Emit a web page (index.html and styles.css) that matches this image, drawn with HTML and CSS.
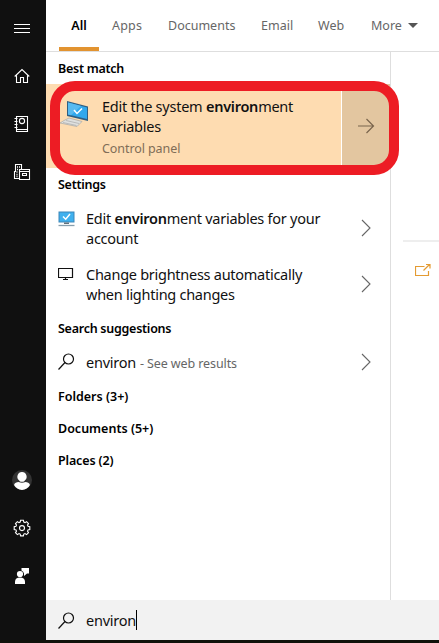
FILE: index.html
```html
<!DOCTYPE html>
<html lang="en">
<head>
<meta charset="utf-8">
<title>Search</title>
<link rel="stylesheet" href="styles.css">
</head>
<body>
<div class="window">
  <nav class="rail">
    <div class="rail-group">
      <svg class="rail-icon" viewBox="0 0 20 20"><path d="M2 6.500h16M2 10.500h16M2 14.500h16"/></svg>
      <svg class="rail-icon" viewBox="0 0 20 20"><path d="M2.700 10.500 10 3.500l7.300 7M4.500 9.500v7h4v-5h3v5h4v-7"/></svg>
      <svg class="rail-icon" viewBox="0 0 20 20"><path d="M4.500 2.500h11v15h-11zM4.500 15.500h11M2.500 4.500h3M2.500 7.500h3M2.500 10.500h3M2.500 13.500h3"/><circle cx="10" cy="7" r="2.600"/></svg>
      <svg class="rail-icon" viewBox="0 0 20 20"><path d="M7 16.500H2.500V9.500h1v-7h6v5M7.500 7.500h10v10h-10zM7.500 9.500h10M10.500 11.500h4v2h-4z"/><path d="M5 5h1M7 5h1M5 7.500h1M4.500 10h1M4.500 12.500h1M4.500 14.500h1" stroke-width="1.500"/></svg>
    </div>
    <div class="rail-group">
      <svg class="rail-icon" viewBox="0 0 20 20"><circle class="avatar" cx="10" cy="10" r="10"/><path class="solid" d="M10 2a4.500 4.700 0 0 1 3 8.300c-.8 1-1.200 1.500-3 1.500s-2.200-.5-3-1.500a4.500 4.700 0 0 1 3-8.300zM2 15c.8-2.300 2.500-3 4.500-3q3.500 1.500 7 0c2 0 3.700.7 4.500 3a10 10 0 0 1-8 5 10 10 0 0 1-8-5z"/></svg>
      <svg class="rail-icon" viewBox="0 0 20 20"><g transform="translate(0 -.700)"><path class="gear" d="M8.600 3h2.800l.4 1.800 1.200.5 1.600-1 1.900 1.900-1 1.600.5 1.200 1.800.4v2.800l-1.800.4-.5 1.200 1 1.600-1.900 1.900-1.600-1-1.200.5-.4 1.800H8.600l-.4-1.800-1.200-.5-1.600 1-1.900-1.900 1-1.600-.5-1.200-1.800-.4V9.400l1.800-.4.5-1.200-1-1.600 1.900-1.900 1.600 1 1.200-.5z"/><circle cx="10" cy="10.800" r="2.500"/></g></svg>
      <svg class="rail-icon" viewBox="0 0 20 20"><path class="solid" d="M9.500 2H17v5.500h-2L12 10V7.500a4 4 0 0 0-2.500-3z"/><circle class="solid" cx="8" cy="8" r="3.100"/><path class="solid" d="M3 18v-2.500q.3-4 5-4t5 4V18z"/></svg>
    </div>
  </nav>
  <main class="main">
    <header class="tabs">
      <span class="tab tab-all">All</span>
      <span class="tab tab-apps">Apps</span>
      <span class="tab tab-docs">Documents</span>
      <span class="tab tab-email">Email</span>
      <span class="tab tab-web">Web</span>
      <span class="tab tab-more">More<i class="caret"></i></span>
    </header>
    <div class="content">
      <section class="results">
        <h2>Best match</h2>
        <div class="best">
          <svg class="best-icon" viewBox="0 0 30 30"><path d="M8 2 29 7.500V22L8 17z" fill="#315f82"/><path d="M9 3.500 28 8.500V20L9 15.500z" fill="#31a8ec"/><path d="M9 3.500 22 7 12 16.200 9 15.500z" fill="#58baf0"/><path d="m15 11 3 3.500 5-5" fill="none" stroke="#fff" stroke-width="1.500"/><path d="M5 21.500 10 19l13 3.500-5 5L1 24z" fill="#dfe0df" stroke="#a9a8a3" stroke-width=".7"/><path d="m4 23.500 13.500 3M7 21.500l13 3" stroke="#aeb0b0" stroke-width=".8"/></svg>
          <div class="best-copy">
            <p class="title">Edit the system <b>environ</b>ment</p>
            <p class="title">variables</p>
            <p class="subtitle">Control panel</p>
          </div>
          <div class="best-open"><svg viewBox="0 0 18 16"><path d="M1 8h15.500M9.500 1l7 7-7 7"/></svg></div>
          <div class="marker"></div>
        </div>
        <h2>Settings</h2>
        <div class="row">
          <svg class="row-icon" viewBox="0 0 18 18"><path d="M.5 1.500h16v11H.5z" fill="#3d86b8"/><path d="M1.500 2.500h14v9h-14z" fill="#3fb0ee"/><path d="m5 6.500 2.700 2.700L12 4" fill="none" stroke="#fff" stroke-width="1.500"/><path d="M6 12.500h5v1.500H6z" fill="#61717d"/><path d="M.5 15.500h16" stroke="#879ead" stroke-width="1.300"/></svg>
          <div class="row-copy"><p class="title">Edit <b>environ</b>ment variables for your</p><p class="title">account</p></div>
          <svg class="chevron" viewBox="0 0 10 18"><path d="m1 1 8 8-8 8"/></svg>
        </div>
        <div class="row">
          <svg class="row-icon line" viewBox="0 0 18 18"><path d="M.5 2.500h14v9H.5zM7.500 11.500v2M5 13.500h5"/></svg>
          <div class="row-copy"><p class="title tight">Change brightness automatically</p><p class="title tight">when lighting changes</p></div>
          <svg class="chevron" viewBox="0 0 10 18"><path d="m1 1 8 8-8 8"/></svg>
        </div>
        <h2>Search suggestions</h2>
        <div class="row row-single">
          <svg class="row-icon line" viewBox="0 0 18 18"><circle cx="10.500" cy="6" r="5"/><path d="m7 9.500-6.500 7"/></svg>
          <p class="title suggestion">environ<small>- See web results</small></p>
          <svg class="chevron" viewBox="0 0 10 18"><path d="m1 1 8 8-8 8"/></svg>
        </div>
        <h2 class="count">Folders (3+)</h2>
        <h2 class="count">Documents (5+)</h2>
        <h2 class="places">Places (2)</h2>
      </section>
      <aside class="preview">
        <div class="divider"></div>
        <svg class="open-icon" viewBox="0 0 16 14"><path d="M9.500 3.500H.5v9h13V8M8.500 7.500l6-6M11 1.500h4v4"/></svg>
      </aside>
    </div>
    <footer class="searchbar">
      <svg class="row-icon line" viewBox="0 0 18 18"><circle cx="10.500" cy="6" r="5"/><path d="m7 9.500-6.500 7"/></svg>
      <span class="title">environ</span><i class="cursor"></i>
    </footer>
  </main>
</div>
</body>
</html>
```
FILE: styles.css
```css
* { box-sizing: border-box; }
body { margin: 0; background: #10110a; font-family: "Noto Sans", "Open Sans", sans-serif; }
p, h2 { margin: 0; white-space: nowrap; }
svg { display: block; flex: none; }
.window { display: flex; height: 640px; width: 439px; overflow: hidden; }
.rail { width: 46px; flex: none; background: #101010; display: flex; flex-direction: column; justify-content: space-between; padding: 18px 0 54px 12px; }
.rail-group { display: grid; gap: 28px; }
.rail-icon { width: 20px; height: 20px; fill: none; stroke: #fff; stroke-width: 1.100; }
.rail-icon .solid { fill: #fff; stroke: none; }
.rail-icon .avatar { fill: #333; stroke: none; }
.main { flex: 1; min-width: 0; background: #fff; display: flex; flex-direction: column; }
.tabs { height: 52px; flex: none; border-bottom: 1px solid #dedede; display: flex; padding-left: 13px; }
.tab { height: 51px; line-height: 51px; font-size: 12.5px; color: #666; white-space: nowrap; flex: none; }
.tab-all { width: 40px; text-align: center; font-weight: 600; color: #000; border-bottom: 4px solid #e29330; margin-right: 13px; }
.tab-apps { width: 56px; letter-spacing: .2px; }
.tab-docs { width: 93px; }
.tab-email { width: 57px; }
.tab-web { width: 53px; }
.tab-more { display: flex; align-items: center; gap: 6px; }
.caret { border: 5px solid transparent; border-top-color: #555; border-bottom: 0; }
.content { flex: 1; display: flex; min-height: 0; }
.results { width: 345px; flex: none; border-right: 1px solid #dedede; }
h2 { height: 32px; line-height: 32px; padding: 1px 0 0 12px; font-size: 12.5px; letter-spacing: -.26px; font-weight: 600; color: #000; }
.count { letter-spacing: 0; }
.places { letter-spacing: -.15px; }
.title { font-size: 14.5px; line-height: 20px; letter-spacing: -.25px; color: #111; }
.title b { font-weight: 600; }
.tight { letter-spacing: -.27px; }
.best { height: 84px; background: #fedcb1; display: flex; position: relative; }
.best-icon { width: 30px; height: 30px; margin: 15px 0 0 13px; }
.best-copy { flex: 1; padding: 12px 0 0 13px; }
.subtitle { font-size: 12.5px; line-height: 26px; letter-spacing: -.08px; color: #806d57; }
.best-open { width: 49px; background: #e3c6a0; border-left: 1px solid #fff; display: flex; align-items: center; justify-content: center; }
.best-open svg { width: 18px; height: 16px; fill: none; stroke: #79644c; stroke-width: 1.200; }
.marker { position: absolute; left: 4px; top: -3px; width: 349px; height: 94px; border: 10px solid #ed1c24; border-radius: 25px; }
.row { height: 56px; display: flex; padding: 8px 19px 0 12px; }
.row-icon { width: 18px; height: 18px; margin-top: 2px; }
.row-icon.line { fill: none; stroke: #111; stroke-width: 1.200; }
.row-copy, .suggestion { flex: 1; padding-left: 10px; }
.chevron { width: 10px; height: 18px; margin-top: 11px; fill: none; stroke: #666; stroke-width: 1.100; }
.row-single { height: 36px; }
.row-single .row-icon, .row-single .chevron { margin-top: 1px; }
.suggestion small { font-size: 12.5px; letter-spacing: -.1px; color: #666; margin-left: 4px; }
.preview { flex: 1; padding-left: 12px; }
.divider { height: 2px; margin-top: 188px; background: #eee; }
.open-icon { width: 16px; height: 14px; margin: 21px 0 0 12px; fill: none; stroke: #e49b32; stroke-width: 1.200; }
.searchbar { height: 40px; flex: none; background: #f2f2f2; display: flex; align-items: center; padding-left: 12px; }
.searchbar .row-icon { margin-top: 1px; }
.searchbar .title { margin-left: 10px; }
.cursor { width: 1px; height: 20px; background: #000; }
```
